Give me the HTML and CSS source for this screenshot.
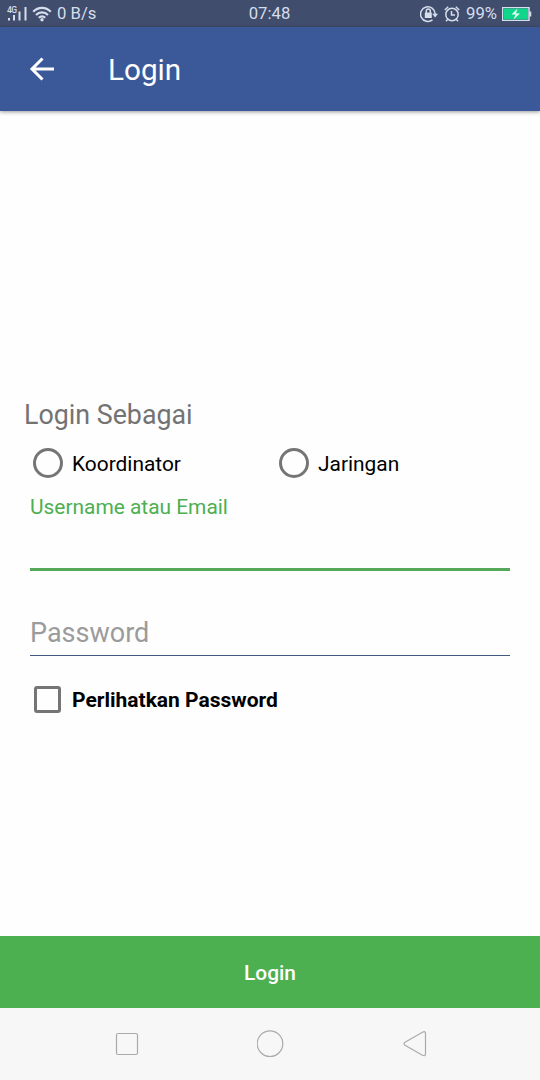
FILE: index.html
```
<!DOCTYPE html>
<html lang="id">

<head>
    <meta charset="UTF-8">
    <meta name="viewport" content="width=device-width, initial-scale=1.0">
    <title>Login</title>
    <link rel="stylesheet" href="styles.css">
</head>

<body>
    <div class="statusbar">
        <div class="status-left">
            <svg width="22" height="18" viewBox="0 0 22 18">
                <text x="0" y="7.500" class="net">4G</text>
                <path d="M2 13v2.500M7 10v5.500M12.500 6.500v9M18.500 2v13.500" class="bars" />
            </svg>
            <svg class="wifi" width="20" height="16" viewBox="0 0 20 16">
                <path d="M1.200 5.800C6 .6 14 .6 18.800 5.800M4 9c3.400-3.600 8.600-3.600 12 0M6.800 11.800c2-2 4.400-2 6.400 0" />
                <circle cx="10" cy="13.800" r="1.700" />
            </svg>
            <span>0 B/s</span>
        </div>
        <span>07:48</span>
        <div class="status-right">
            <svg width="18" height="18" viewBox="0 0 18 18">
                <path d="M12.500 14.800A7.300 7.300 0 1 1 15.200 9" class="line" />
                <path d="M12.200 8.800h5.800l-2.900 3.800z" class="solid" />
                <path d="M4.800 7.500h7V13h-7z" class="solid" />
                <path d="M6.300 8V6a2 2 0 0 1 4 0v2" class="line" />
            </svg>
            <svg class="alarm" width="16" height="18" viewBox="0 0 16 18">
                <circle cx="8" cy="9.500" r="6.200" class="line" />
                <path d="M.8 5 4.200 1.800M15.200 5 11.800 1.800M3.800 14.200 2 16.200M12.200 14.200 14 16.200M7.500 6v4h3.500" class="line" />
            </svg>
            <span>99%</span>
            <svg class="battery" width="30" height="14" viewBox="0 0 30 14">
                <path d="M.5.500h26.500v13H.5zM28.500 4.500v5" class="line" />
                <path d="M1.500 1.500h24.500v11H1.500z" class="charge" />
                <path d="M15.500 1.500 9.500 7.500h4L11.500 12.500l6.500-6H14z" class="bolt" />
            </svg>
        </div>
    </div>

    <header class="appbar">
        <svg width="26" height="24" viewBox="0 0 26 24">
            <path d="M25 12H3M13.500 1.500 3 12l10.500 10.500" />
        </svg>
        <h1>Login</h1>
    </header>

    <form class="login">
        <div class="fields">
            <h2>Login Sebagai</h2>
            <div class="radios">
                <label><input type="radio" name="role" value="koordinator"><span>Koordinator</span></label>
                <label><input type="radio" name="role" value="jaringan"><span>Jaringan</span></label>
            </div>
            <div class="field">
                <label for="username">Username atau Email</label>
                <input type="text" name="username" id="username" class="active">
            </div>
            <div class="field">
                <input type="password" name="password" id="password" placeholder="Password">
            </div>
            <label class="show"><input type="checkbox" name="show" id="show"><span>Perlihatkan Password</span></label>
        </div>
        <button type="button">Login</button>
    </form>

    <nav class="navbar">
        <svg width="24" height="28" viewBox="0 0 24 28">
            <rect x="1.500" y="3.500" width="21" height="21" rx="1.500" />
        </svg>
        <svg width="28" height="28" viewBox="0 0 28 28">
            <circle cx="13" cy="13.700" r="12.800" />
        </svg>
        <svg width="26" height="28" viewBox="0 0 26 28">
            <path d="M3 12.300 20.500 2.200Q23.500.800 23.500 3.500V23.800Q23.500 26.500 20.500 25.200L3 15.200Q1 13.700 3 12.300z" />
        </svg>
    </nav>
    <script>
        document.getElementById("show").onchange = function () {
            document.getElementById("password").type = this.checked ? "text" : "password";
        };
    </script>
</body>

</html>
```
FILE: styles.css
```
* {
    box-sizing: border-box;
}

body {
    margin: 0;
    height: 1080px;
    display: flex;
    flex-direction: column;
    font-family: Roboto, sans-serif;
    background: #fefefe;
    color: #000;
}

svg {
    fill: none;
    flex: none;
}

.statusbar {
    height: 27px;
    padding: 0 8px 0 7px;
    display: grid;
    grid-template-columns: 1fr auto 1fr;
    align-items: center;
    background: #404d6c;
    color: #d6ddec;
    font-size: 16.7px;
    line-height: 28px;
}

.status-left,
.status-right {
    display: flex;
    align-items: center;
    height: 27px;
}

.status-right {
    justify-content: flex-end;
}

.net {
    fill: #d6ddec;
    font-size: 8.5px;
    font-weight: 500;
    letter-spacing: -0.5px;
}

.bars {
    stroke: #d6ddec;
    stroke-width: 2;
}

.wifi {
    margin: 0 5px 0 3px;
    stroke: #d6ddec;
    stroke-width: 2.2;
}

.wifi circle {
    fill: #d6ddec;
    stroke: none;
}

.line {
    stroke: #d6ddec;
    stroke-width: 1.5;
}

.solid {
    fill: #d6ddec;
}

.alarm {
    margin: 0 6px;
}

.battery {
    margin-left: 5px;
}

.charge {
    fill: #10d68c;
}

.bolt {
    fill: #e8fff6;
}

.appbar {
    height: 84px;
    padding-left: 29px;
    display: flex;
    align-items: center;
    background: #3b5998;
    color: #fff;
    box-shadow: 0 1px 4px rgba(0, 0, 0, 0.4);
}

.appbar svg {
    stroke: #fff;
    stroke-width: 3;
}

.appbar h1 {
    margin: 0 0 0 53px;
    font-size: 29.7px;
    font-weight: normal;
}

.login {
    flex: 1;
    display: flex;
    flex-direction: column;
}

.fields {
    flex: 1;
    padding: 285px 30px 0 24px;
}

.fields h2 {
    margin: 0;
    color: #737373;
    font-size: 26.8px;
    font-weight: normal;
    line-height: 38px;
}

.radios {
    display: grid;
    grid-template-columns: 246px 1fr;
    height: 58px;
    padding-left: 9px;
}

.radios label,
.show {
    display: flex;
    align-items: center;
    font-size: 21px;
}

.radios span,
.show span {
    padding-top: 2px;
}

.radios label {
    font-size: 20.9px;
}

input {
    appearance: none;
    margin: 0;
    font-family: inherit;
}

input[type="radio"] {
    width: 30px;
    height: 30px;
    margin-right: 9px;
    border: 3px solid #757575;
    border-radius: 50%;
}

input[type="radio"]:checked {
    background: #4caf50;
    box-shadow: inset 0 0 0 5px #fff;
}

.field {
    padding-left: 6px;
}

.field label {
    display: block;
    color: #4caf50;
    font-size: 20.9px;
    line-height: 30px;
}

.field input {
    display: block;
    width: 100%;
    height: 46px;
    margin-top: 39px;
    padding: 1px 0 0;
    border: 0;
    border-bottom: 1px solid #3f5c80;
    outline: none;
    background: none;
    font-size: 27px;
}

.field input.active {
    height: 49px;
    margin-top: 0;
    border-bottom: 3px solid #55a859;
}

.field input::placeholder {
    color: #9b9b9b;
}

.show {
    height: 30px;
    margin-top: 28px;
    padding-left: 10px;
    font-weight: bold;
}

input[type="checkbox"] {
    width: 27px;
    height: 27px;
    margin-right: 11px;
    border: 3px solid #757575;
    border-radius: 3px;
}

input[type="checkbox"]:checked {
    background: #4caf50;
}

.login button {
    height: 72px;
    padding-top: 2px;
    border: 0;
    background: #4caf50;
    color: #fff;
    font: 500 20.9px Roboto, sans-serif;
}

.navbar {
    height: 72px;
    padding: 0 112px 0 115px;
    display: flex;
    align-items: center;
    justify-content: space-between;
    background: #f7f7f7;
}

.navbar svg {
    stroke: #aaa;
    stroke-width: 1.2;
}
```
